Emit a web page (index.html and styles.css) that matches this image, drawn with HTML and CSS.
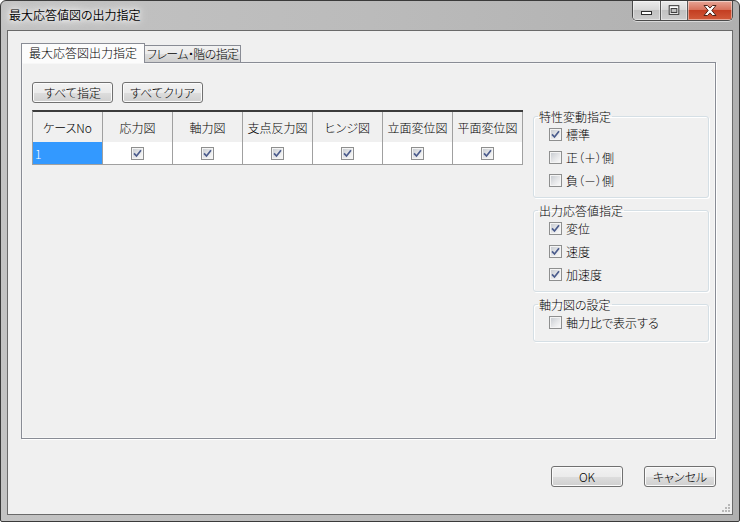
FILE: index.html
```html
<!DOCTYPE html>
<html lang="ja">
<head>
<meta charset="utf-8">
<title>最大応答値図の出力指定</title>
<link rel="stylesheet" href="styles.css">
</head>
<body>
<div class="window">
  <div class="titlebar">
    <div class="title">最大応答値図の出力指定</div>
    <div class="caption-buttons">
      <div class="cap cap-min">
        <svg width="27" height="19" viewBox="0 0 27 19"><rect x="8.5" y="10.5" width="10" height="3" fill="#fff" stroke="#2f2f2f"/></svg>
      </div>
      <div class="cap cap-max">
        <svg width="27" height="19" viewBox="0 0 27 19"><rect x="8.5" y="4.5" width="10" height="9" fill="#fff" stroke="#2f2f2f"/><rect x="10.5" y="7.5" width="6" height="4" fill="#c4c4c4" stroke="#2f2f2f"/></svg>
      </div>
      <div class="cap cap-close">
        <svg width="44" height="19" viewBox="0 0 44 19"><polygon points="16,4.5 19.5,4.5 22,7.1 24.5,4.5 28,4.5 23.8,9.5 28,14.5 24.5,14.5 22,11.9 19.5,14.5 16,14.5 20.2,9.5" fill="#fff" stroke="#4d2419" stroke-width="1"/></svg>
      </div>
    </div>
  </div>
  <div class="client">
    <div class="tabs">
      <div class="tab tab-active">最大応答図出力指定</div>
      <div class="tab tab-inactive">フレーム・階の指定</div>
    </div>
    <div class="panel">
      <div class="left">
        <div class="toolbar">
          <button class="btn btn-tool">すべて指定</button>
          <button class="btn btn-tool">すべてクリア</button>
        </div>
        <div class="grid">
          <div class="hcell">ケースNo</div>
          <div class="hcell">応力図</div>
          <div class="hcell">軸力図</div>
          <div class="hcell">支点反力図</div>
          <div class="hcell">ヒンジ図</div>
          <div class="hcell">立面変位図</div>
          <div class="hcell">平面変位図</div>
          <div class="dcell dcell-sel">1</div>
          <div class="dcell"><span class="cb"><svg width="9" height="9" viewBox="0 0 9 9"><path d="M1 4.3 L3.5 7 L8 1.3" fill="none" stroke="#4a5b8c" stroke-width="1.7"/></svg></span></div>
          <div class="dcell"><span class="cb"><svg width="9" height="9" viewBox="0 0 9 9"><path d="M1 4.3 L3.5 7 L8 1.3" fill="none" stroke="#4a5b8c" stroke-width="1.7"/></svg></span></div>
          <div class="dcell"><span class="cb"><svg width="9" height="9" viewBox="0 0 9 9"><path d="M1 4.3 L3.5 7 L8 1.3" fill="none" stroke="#4a5b8c" stroke-width="1.7"/></svg></span></div>
          <div class="dcell"><span class="cb"><svg width="9" height="9" viewBox="0 0 9 9"><path d="M1 4.3 L3.5 7 L8 1.3" fill="none" stroke="#4a5b8c" stroke-width="1.7"/></svg></span></div>
          <div class="dcell"><span class="cb"><svg width="9" height="9" viewBox="0 0 9 9"><path d="M1 4.3 L3.5 7 L8 1.3" fill="none" stroke="#4a5b8c" stroke-width="1.7"/></svg></span></div>
          <div class="dcell"><span class="cb"><svg width="9" height="9" viewBox="0 0 9 9"><path d="M1 4.3 L3.5 7 L8 1.3" fill="none" stroke="#4a5b8c" stroke-width="1.7"/></svg></span></div>
        </div>
      </div>
      <div class="right">
        <fieldset class="group">
          <legend>特性変動指定</legend>
          <div class="row"><span class="cb"><svg width="9" height="9" viewBox="0 0 9 9"><path d="M1 4.3 L3.5 7 L8 1.3" fill="none" stroke="#4a5b8c" stroke-width="1.7"/></svg></span>標準</div>
          <div class="row"><span class="cb"></span>正（＋）側</div>
          <div class="row"><span class="cb"></span>負（－）側</div>
        </fieldset>
        <fieldset class="group">
          <legend>出力応答値指定</legend>
          <div class="row"><span class="cb"><svg width="9" height="9" viewBox="0 0 9 9"><path d="M1 4.3 L3.5 7 L8 1.3" fill="none" stroke="#4a5b8c" stroke-width="1.7"/></svg></span>変位</div>
          <div class="row"><span class="cb"><svg width="9" height="9" viewBox="0 0 9 9"><path d="M1 4.3 L3.5 7 L8 1.3" fill="none" stroke="#4a5b8c" stroke-width="1.7"/></svg></span>速度</div>
          <div class="row"><span class="cb"><svg width="9" height="9" viewBox="0 0 9 9"><path d="M1 4.3 L3.5 7 L8 1.3" fill="none" stroke="#4a5b8c" stroke-width="1.7"/></svg></span>加速度</div>
        </fieldset>
        <fieldset class="group group-single">
          <legend>軸力図の設定</legend>
          <div class="row"><span class="cb"></span>軸力比で表示する</div>
        </fieldset>
      </div>
    </div>
    <div class="footer">
      <button class="btn btn-dlg">OK</button>
      <button class="btn btn-dlg">キャンセル</button>
    </div>
    <div class="grip">
      <svg width="12" height="12" viewBox="0 0 12 12">
        <rect x="9" y="3" width="2" height="2" fill="#b8b8b8"/>
        <rect x="6" y="6" width="2" height="2" fill="#b8b8b8"/>
        <rect x="9" y="6" width="2" height="2" fill="#b8b8b8"/>
        <rect x="3" y="9" width="2" height="2" fill="#b8b8b8"/>
        <rect x="6" y="9" width="2" height="2" fill="#b8b8b8"/>
        <rect x="9" y="9" width="2" height="2" fill="#b8b8b8"/>
      </svg>
    </div>
  </div>
</div>
</body>
</html>
```

FILE: styles.css
```css
* { box-sizing: border-box; }

html, body {
  margin: 0;
  padding: 0;
}

body {
  width: 740px;
  height: 522px;
  overflow: hidden;
  background: #ffffff;
  font-family: "Noto Sans CJK JP", "Noto Sans", sans-serif;
  font-size: 12px;
  font-weight: 300;
  font-feature-settings: "palt";
  color: #000;
}

.window {
  width: 740px;
  height: 522px;
  border: 1px solid #3a3a3a;
  border-radius: 6px 6px 2px 2px;
  background: linear-gradient(to right, #c3c3c3 0%, #bbbbbb 50%, #b0b0b0 100%);
  display: flex;
  flex-direction: column;
  padding: 0 6px 6px;
}

.titlebar {
  height: 29px;
  display: flex;
  align-items: flex-start;
  flex: none;
}

.title {
  margin-top: 6px;
  padding-left: 2px;
  line-height: 16px;
  font-size: 12px;
  font-weight: 350;
  color: #000;
  text-shadow: 0 0 5px #fff, 0 0 10px #fff, 0 0 14px rgba(255,255,255,0.8);
}

.caption-buttons {
  margin-left: auto;
  display: flex;
  height: 20px;
  border: 1px solid #4a4a4a;
  border-top: none;
  border-radius: 0 0 5px 5px;
  overflow: hidden;
  box-shadow: 0 1px 0 rgba(255,255,255,0.5);
}

.cap {
  height: 19px;
  display: flex;
  align-items: center;
  justify-content: center;
  background: linear-gradient(#ececec 0%, #d9d9d9 45%, #c2c2c2 50%, #cdcdcd 100%);
  box-shadow: inset 0 0 0 1px rgba(255,255,255,0.45);
}

.cap svg { display: block; }

.cap-min { width: 27px; }

.cap-max {
  width: 27px;
  border-left: 1px solid #5a5a5a;
}

.cap-close {
  width: 45px;
  border-left: 1px solid #5a5a5a;
  background: linear-gradient(#e7a596 0%, #d8735d 45%, #c43e22 50%, #d25a3a 100%);
}

.client {
  flex: 1;
  position: relative;
  border: 1px solid #6a6a6a;
  background: #f0f0f0;
  padding: 12px 16px 0 13px;
  display: flex;
  flex-direction: column;
}

.tabs {
  height: 19px;
  display: flex;
  align-items: flex-end;
  flex: none;
}

.tab {
  font-size: 12px;
  white-space: nowrap;
}

.tab-active {
  position: relative;
  z-index: 1;
  height: 20px;
  margin-bottom: -1px;
  padding: 0 7px;
  line-height: 18px;
  border: 1px solid #898c95;
  border-bottom: none;
  background: #fcfcfc;
}

.tab-inactive {
  height: 17px;
  padding: 0 2px 0 2px;
  line-height: 16px;
  letter-spacing: -0.6px;
  border: 1px solid #898c95;
  border-left: none;
  border-bottom: none;
  background: linear-gradient(#f2f2f2 0%, #ebebeb 50%, #dddddd 51%, #cfcfcf 100%);
}

.panel {
  height: 377px;
  flex: none;
  border: 1px solid #898c95;
  background: #f0f0f0;
  box-shadow: 1px 1px 0 #ffffff, inset 0 0 0 1px #f7f7f7;
  padding: 19px 0 0 10px;
  display: flex;
  align-items: flex-start;
}

.left {
  width: 491px;
  flex: none;
}

.toolbar {
  display: flex;
  gap: 9px;
}

.btn {
  font-family: inherit;
  font-size: 12px;
  font-weight: 300;
  font-feature-settings: "palt";
  color: #000;
  border: 1px solid #707070;
  border-radius: 3px;
  background: linear-gradient(#f2f2f2 0%, #ebebeb 50%, #dddddd 51%, #cfcfcf 100%);
  box-shadow: inset 0 0 0 1px #fbfbfb;
  padding: 0;
  margin: 0;
  line-height: 18px;
}

.btn-tool {
  width: 81px;
  height: 21px;
}

.grid {
  margin-top: 7px;
  display: grid;
  grid-template-columns: repeat(7, 70px);
  border-top: 2px solid #3c3c3c;
  border-left: 1px solid #a0a0a0;
}

.hcell {
  height: 30px;
  display: flex;
  align-items: center;
  justify-content: center;
  border-right: 1px solid #a0a0a0;
  background: #f0f0f0;
  white-space: nowrap;
}

.dcell {
  height: 23px;
  display: flex;
  align-items: center;
  justify-content: center;
  border-right: 1px solid #a0a0a0;
  border-bottom: 1px solid #a0a0a0;
  background: #ffffff;
}

.dcell-sel {
  justify-content: flex-start;
  padding-left: 2px;
  background: #3399ff;
  color: #ffffff;
}

.cb {
  width: 13px;
  height: 13px;
  flex: none;
  border: 1px solid #8e8f8f;
  padding: 1px;
  display: flex;
  align-items: center;
  justify-content: center;
  background: linear-gradient(135deg, #c9cdd2 0%, #e6e7e9 55%, #f8f8f8 100%) content-box, #f4f4f4;
}

.cb svg { display: block; }

.right {
  width: 176px;
  flex: none;
  margin-left: 10px;
  margin-top: 28px;
  display: flex;
  flex-direction: column;
  gap: 6px;
}

.group {
  margin: 0;
  min-width: 0;
  padding: 0 0 5px;
  border: 1px solid #d5dfe5;
  border-radius: 3px;
  box-shadow: inset 1px 1px 0 #ffffff, 1px 1px 0 #ffffff;
}

.group legend {
  margin-left: 4px;
  padding: 0 1px;
  line-height: 13px;
  font-size: 12px;
}

.group-single {
  padding-bottom: 7px;
}

.row {
  height: 23px;
  display: flex;
  align-items: center;
  gap: 4px;
  padding-left: 15px;
  white-space: nowrap;
}

.footer {
  margin-top: 27px;
  display: flex;
  justify-content: flex-end;
  gap: 21px;
}

.btn-dlg {
  width: 72px;
  height: 21px;
}

.grip {
  position: absolute;
  right: 1px;
  bottom: 1px;
  width: 12px;
  height: 12px;
}

.grip svg { display: block; }
```
